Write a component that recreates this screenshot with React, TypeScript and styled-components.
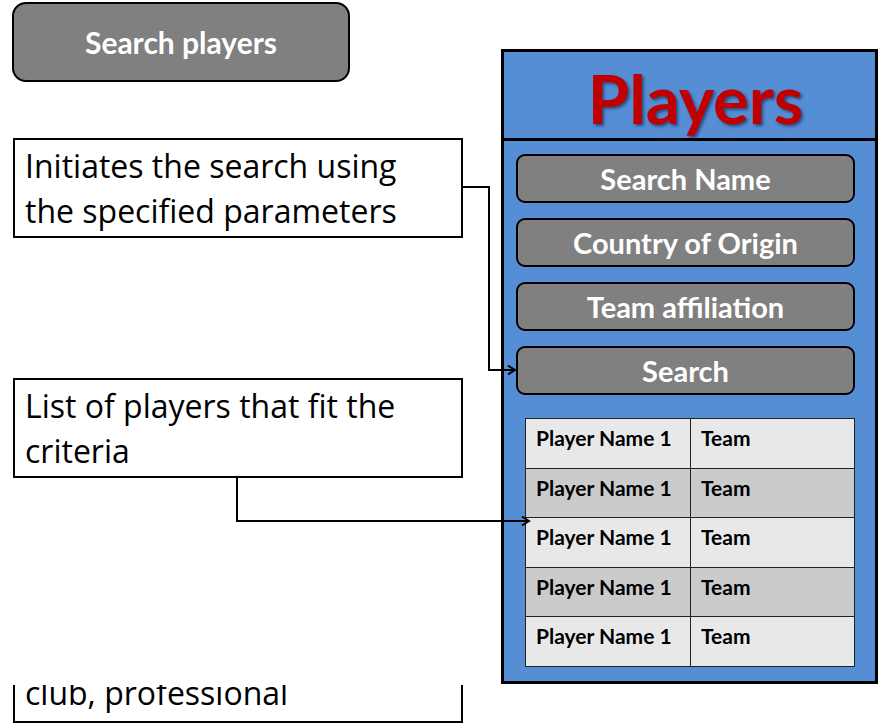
import styled, { createGlobalStyle } from 'styled-components'

const GlobalStyle = createGlobalStyle`
  html, body {
    margin: 0;
    padding: 0;
    background: #ffffff;
  }
`

const Page = styled.div`
  position: relative;
  display: flex;
  width: 894px;
  height: 725px;
  padding-left: 12px;
  box-sizing: border-box;
  overflow: hidden;
  background: #ffffff;
`

const LeftColumn = styled.div`
  display: flex;
  flex-direction: column;
  width: 451px;
`

const TopButton = styled.div`
  display: flex;
  align-items: center;
  justify-content: center;
  width: 338px;
  height: 80px;
  margin-top: 2px;
  box-sizing: border-box;
  border: 2px solid #000;
  border-radius: 14px;
  background: #808080;
  color: #fff;
  font-family: Lato, 'Liberation Sans', sans-serif;
  font-weight: 700;
  font-size: 30px;
`

const Note = styled.div<{ $top: number }>`
  width: 450px;
  height: 100px;
  margin-top: ${(p) => p.$top}px;
  margin-left: 1px;
  padding: 3px 10px 0;
  box-sizing: border-box;
  border: 2px solid #000;
  background: #fff;
  font-family: 'Open Sans', 'Liberation Sans', sans-serif;
  font-size: 32px;
  line-height: 45px;
  color: #000;
`

// the third note runs off the slide: only its last line shows
const ClippedNote = styled.div`
  width: 450px;
  height: 38px;
  margin-top: 207px;
  margin-left: 1px;
  padding: 0 10px;
  box-sizing: border-box;
  border: 2px solid #000;
  border-top: none;
  overflow: hidden;
  font-family: 'Open Sans', 'Liberation Sans', sans-serif;
  font-size: 32px;
  line-height: 45px;
  color: #000;
`

const ClippedLine = styled.div`
  margin-top: -15px;
  white-space: nowrap;
`

const Panel = styled.div`
  display: flex;
  flex-direction: column;
  width: 377px;
  height: 635px;
  margin-top: 49px;
  margin-left: 38px;
  box-sizing: border-box;
  border: 3px solid #000;
  background: #558ed5;
`

const PanelHeader = styled.div`
  display: flex;
  align-items: center;
  justify-content: center;
  height: 89px;
  padding: 6px 0 0 12px;
  box-sizing: border-box;
  border-bottom: 3px solid #000;
  color: #c00000;
  font-family: Lato, 'Liberation Sans', sans-serif;
  font-weight: 700;
  font-size: 67px;
  text-shadow: 2px 2px 3px rgba(10, 20, 60, 0.55);
`

const PanelBody = styled.div`
  display: flex;
  flex-direction: column;
  gap: 15px;
  padding: 13px 20px 14px 12px;
`

const PanelButton = styled.div`
  display: flex;
  align-items: center;
  justify-content: center;
  height: 49px;
  box-sizing: border-box;
  border: 2px solid #000;
  border-radius: 9px;
  background: #808080;
  color: #fff;
  font-family: Lato, 'Liberation Sans', sans-serif;
  font-weight: 700;
  font-size: 29px;
`

const ResultTable = styled.div`
  display: grid;
  grid-template-columns: 165px 1fr;
  grid-auto-rows: 49.6px;
  width: 330px;
  margin: 8px 0 0 9px;
  box-sizing: border-box;
  border: 1px solid #222;
  border-bottom: none;
`

const Cell = styled.div<{ $shade: boolean; $first: boolean }>`
  padding: 6px 10px 0;
  box-sizing: border-box;
  border-bottom: 1px solid #222;
  border-right: ${(p) => (p.$first ? '1px solid #222' : 'none')};
  background: ${(p) => (p.$shade ? '#cbcbcb' : '#e8e8e8')};
  color: #000;
  font-family: Lato, 'Liberation Sans', sans-serif;
  font-weight: 700;
  font-size: 21px;
  white-space: nowrap;
`

const Connectors = styled.svg`
  position: absolute;
  left: 0;
  top: 0;
  pointer-events: none;
`

const buttons = ['Search Name', 'Country of Origin', 'Team affiliation', 'Search']
const rows = [0, 1, 2, 3, 4]

export default function App() {
  return (
    <>
      <GlobalStyle />
      <Page>
        <LeftColumn>
          <TopButton>Search players</TopButton>
          <Note $top={56}>
            Initiates the search using
            <br />
            the specified parameters
          </Note>
          <Note $top={140}>
            List of players that fit the
            <br />
            criteria
          </Note>
          <ClippedNote>
            <ClippedLine>club, professional</ClippedLine>
          </ClippedNote>
        </LeftColumn>

        <Panel>
          <PanelHeader>Players</PanelHeader>
          <PanelBody>
            {buttons.map((b) => (
              <PanelButton key={b}>{b}</PanelButton>
            ))}
            <ResultTable>
              {rows.map((r) => [
                <Cell key={`n${r}`} $shade={r % 2 === 1} $first>
                  Player Name 1
                </Cell>,
                <Cell key={`t${r}`} $shade={r % 2 === 1} $first={false}>
                  Team
                </Cell>,
              ])}
            </ResultTable>
          </PanelBody>
        </Panel>

        {/* callout lines from the notes to the panel */}
        <Connectors width={894} height={725} viewBox="0 0 894 725">
          <g fill="none" stroke="#000" strokeWidth={2}>
            <path d="M463 187 H489 V370 H514" />
            <polyline points="508,365.5 515,370 508,374.5" />
            <path d="M237 478 V521 H528" />
            <polyline points="522,516.5 529,521 522,525.5" />
          </g>
        </Connectors>
      </Page>
    </>
  )
}
